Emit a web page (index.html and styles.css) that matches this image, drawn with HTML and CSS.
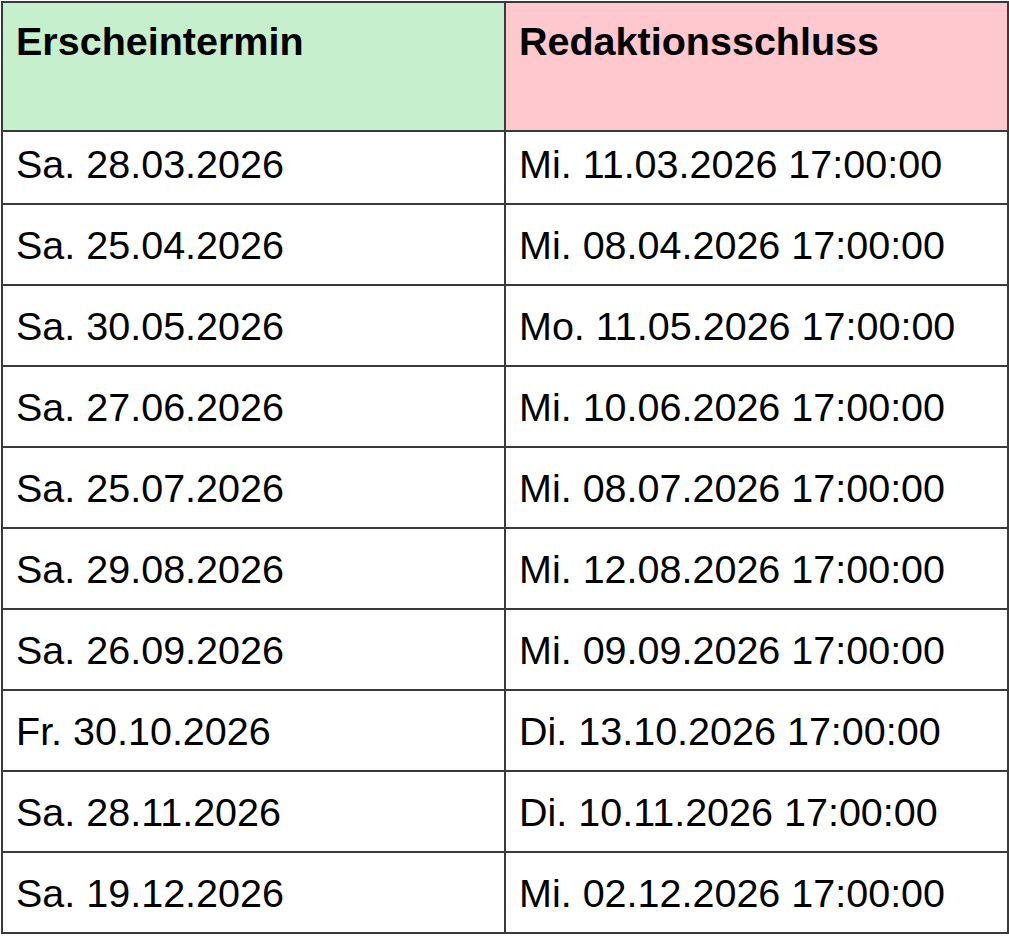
FILE: index.html
```html
<!DOCTYPE html>
<html lang="de">
<head>
<meta charset="utf-8">
<title>Erscheintermine</title>
<link rel="stylesheet" href="styles.css">
</head>
<body>
<table class="plan">
  <colgroup><col class="col-a"><col class="col-b"></colgroup>
  <thead>
    <tr class="head-row">
      <th class="h-green">Erscheintermin</th>
      <th class="h-red">Redaktionsschluss</th>
    </tr>
  </thead>
  <tbody>
    <tr class="first"><td>Sa. 28.03.2026</td><td>Mi. 11.03.2026 17:00:00</td></tr>
    <tr><td>Sa. 25.04.2026</td><td>Mi. 08.04.2026 17:00:00</td></tr>
    <tr><td>Sa. 30.05.2026</td><td>Mo. 11.05.2026 17:00:00</td></tr>
    <tr><td>Sa. 27.06.2026</td><td>Mi. 10.06.2026 17:00:00</td></tr>
    <tr><td>Sa. 25.07.2026</td><td>Mi. 08.07.2026 17:00:00</td></tr>
    <tr><td>Sa. 29.08.2026</td><td>Mi. 12.08.2026 17:00:00</td></tr>
    <tr><td>Sa. 26.09.2026</td><td>Mi. 09.09.2026 17:00:00</td></tr>
    <tr><td>Fr. 30.10.2026</td><td>Di. 13.10.2026 17:00:00</td></tr>
    <tr><td>Sa. 28.11.2026</td><td>Di. 10.11.2026 17:00:00</td></tr>
    <tr class="last"><td>Sa. 19.12.2026</td><td>Mi. 02.12.2026 17:00:00</td></tr>
  </tbody>
</table>
</body>
</html>
```
FILE: styles.css
```css
html, body {
  margin: 0;
  padding: 0;
  background: #ffffff;
}
body {
  font-family: "Liberation Sans", Arial, sans-serif;
  color: #000;
}
.plan {
  margin: 1px 0 0 1px;
  width: 1006px;
  table-layout: fixed;
  border-collapse: collapse;
  border: 2px solid #3a3a3a;
  font-size: 39.5px;
  line-height: 45px;
}
.col-a, .col-b { width: 503px; }
.plan th, .plan td {
  border: 2px solid #3a3a3a;
  text-align: left;
  padding: 0 0 16px 13px;
  vertical-align: bottom;
  white-space: nowrap;
}
.plan th {
  font-weight: bold;
  vertical-align: top;
  padding-top: 16px;
  padding-bottom: 0;
}
.head-row { height: 129px; }
.h-green { background: #c6efce; }
.h-red { background: #ffc7ce; }
.plan tbody tr { height: 81px; }
.plan tbody tr.first { height: 73px; }
```
